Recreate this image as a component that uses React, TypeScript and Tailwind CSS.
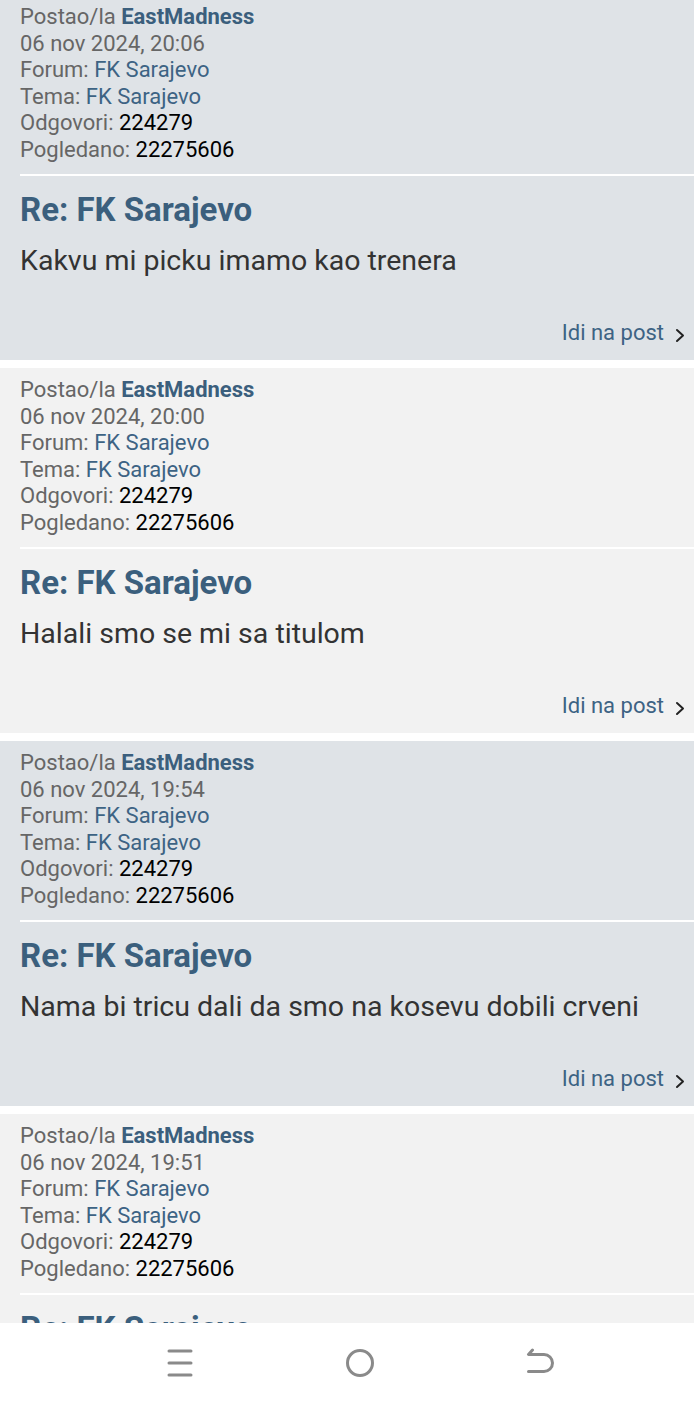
import React from "react";

type Post = {
  date: string;
  body?: string;
  tone: "blue" | "light";
};

const posts: Post[] = [
  { date: "06 nov 2024, 20:06", body: "Kakvu mi picku imamo kao trenera", tone: "blue" },
  { date: "06 nov 2024, 20:00", body: "Halali smo se mi sa titulom", tone: "light" },
  { date: "06 nov 2024, 19:54", body: "Nama bi tricu dali da smo na kosevu dobili crveni", tone: "blue" },
  { date: "06 nov 2024, 19:51", tone: "light" },
];

const Chevron = () => (
  <svg width="12" height="16" viewBox="0 0 12 16" className="ml-[10px] mt-[3px]">
    <path d="M3 3 L9 8.5 L3 14" fill="none" stroke="#222" strokeWidth="2" strokeLinecap="round" strokeLinejoin="round" />
  </svg>
);

const PostCard = ({ post }: { post: Post }) => {
  return (
    <div className={`${post.tone === "blue" ? "bg-[#dfe3e7]" : "bg-[#f2f2f2]"} pt-[9px] pb-[14px]`}>
      <div className="pl-[20px] text-[22px] leading-[26.5px] text-[#666]">
        <div>
          Postao/la <span className="font-bold text-[#3b5f7d]">EastMadness</span>
        </div>
        <div>{post.date}</div>
        <div>
          Forum: <span className="text-[#3d6384]">FK Sarajevo</span>
        </div>
        <div>
          Tema: <span className="text-[#3d6384]">FK Sarajevo</span>
        </div>
        <div>
          Odgovori: <span className="text-black">224279</span>
        </div>
        <div>
          Pogledano: <span className="text-black">22275606</span>
        </div>
      </div>
      <div className="ml-[20px] mt-[11px] h-[2px] bg-white" />
      <div className="pl-[20px] mt-[16px] text-[33px] leading-[36px] font-bold text-[#3b5f7d]">Re: FK Sarajevo</div>
      {post.body && (
        <>
          <div className="pl-[20px] mt-[16px] text-[28.5px] leading-[34px] text-[#333]">{post.body}</div>
          <div className="mt-[42px] flex items-center justify-end pr-[8px] text-[22px] leading-[26px] text-[#3d6384]">
            Idi na post
            <Chevron />
          </div>
        </>
      )}
    </div>
  );
};

const App = () => {
  return (
    <div className="flex h-[1404px] w-[694px] flex-col bg-white font-['Roboto',sans-serif]">
      <div className="flex-1 overflow-hidden">
        <div className="-mt-[5px] flex flex-col gap-[8px]">
          {posts.map((p, i) => (
            <PostCard key={i} post={p} />
          ))}
        </div>
      </div>
      <div className="flex h-[81px] items-center bg-white pb-[2px] pl-[167px]">
        <svg width="26" height="28" viewBox="0 0 26 28">
          <g stroke="#8a8a8a" strokeWidth="3" strokeLinecap="round">
            <line x1="2" y1="2" x2="24" y2="2" />
            <line x1="2" y1="14" x2="24" y2="14" />
            <line x1="2" y1="26" x2="24" y2="26" />
          </g>
        </svg>
        <svg width="30" height="30" viewBox="0 0 30 30" className="ml-[152px]">
          <circle cx="15" cy="15" r="12.5" fill="none" stroke="#8a8a8a" strokeWidth="3" />
        </svg>
        <svg width="30" height="30" viewBox="0 0 30 30" className="ml-[150px]">
          <path d="M7.5 2 L3.5 6.5 H19 A8.5 8.5 0 0 1 19 23.5 H3.5" fill="none" stroke="#8a8a8a" strokeWidth="3" strokeLinecap="round" strokeLinejoin="round" />
        </svg>
      </div>
    </div>
  );
};

export default App;
